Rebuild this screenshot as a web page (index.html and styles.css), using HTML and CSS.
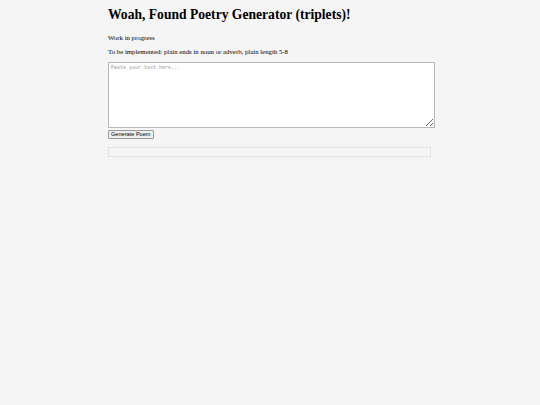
FILE: index.html
```html
<!DOCTYPE html>
<html>
<head>
<meta charset="utf-8">
<link rel="stylesheet" href="styles.css">
</head>
<body>
<div class="container">
  <h1 class="title">Woah, Found Poetry Generator (triplets)!</h1>
  <p class="note">Work in progress</p>
  <p class="note">To be implemented: plain ends in noun or adverb, plain length 5-8</p>
  <textarea class="input" placeholder="Paste your text here..."></textarea>
  <button class="btn">Generate Poem</button>
  <div class="output"></div>
</div>
</body>
</html>
```
FILE: styles.css
```css
html, body {
  margin: 0;
  padding: 0;
  background: #f5f5f5;
}
body {
  font-family: "Liberation Serif", "Times New Roman", serif;
  color: #000;
}
.container {
  width: 324px;
  margin: 0 auto;
  padding-top: 7px;
}
.title {
  font-size: 13.6px;
  font-weight: bold;
  margin: 0 0 11px 0;
  line-height: 16px;
}
.note {
  font-size: 6.8px;
  margin: 0 0 6px 0;
  line-height: 8px;
}
.input {
  display: block;
  box-sizing: border-box;
  width: 327px;
  height: 66px;
  margin: 4px 0 0 0;
  padding: 2px;
  border: 1px solid #b8b8b8;
  background: #fff;
  font-family: "Liberation Mono", "Courier New", monospace;
  font-size: 5px;
  color: #000;
  resize: vertical;
}
.input::placeholder {
  color: #999;
}
.btn {
  display: block;
  box-sizing: border-box;
  margin: 2px 0 0 0;
  padding: 0 2px;
  height: 9px;
  font-family: "Liberation Sans", Arial, sans-serif;
  font-size: 5.6px;
  line-height: 7px;
  border: 1px solid #999;
  border-radius: 1px;
  background: #efefef;
  color: #000;
}
.output {
  box-sizing: border-box;
  width: 323px;
  margin-top: 8px;
  height: 10px;
  border: 1px solid #e0e0e0;
  background: #f5f5f5;
}
```
